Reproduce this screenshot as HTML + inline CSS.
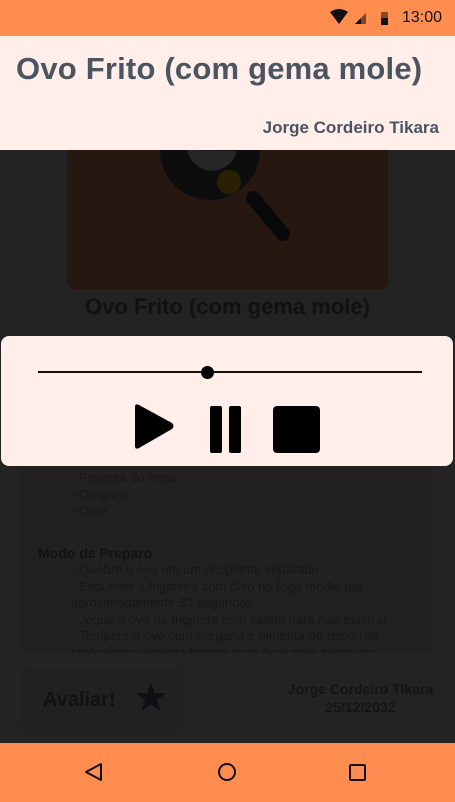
<!DOCTYPE html>
<html><head><meta charset="utf-8"><style>
*{margin:0;padding:0;box-sizing:border-box}
body{width:455px;height:802px;position:relative;overflow:hidden;background:#232323;font-family:"Liberation Sans",sans-serif}
.abs{position:absolute}
</style></head><body>
<div class="abs" style="left:0;top:0;width:455px;height:36px;background:#fe8d4f"></div>
<svg class="abs" style="left:330px;top:9px" width="70" height="18">
<path d="M0 3 Q9 -3 18 3 L9 15 Z" fill="#111"/>
<path d="M25 15 L36 4 L36 15 Z" fill="#7a4525"/><path d="M25 15 L31 9 L31 15 Z" fill="#111"/>
<rect x="51" y="3" width="7" height="13" rx="1" fill="#8a4a28"/><rect x="51" y="9" width="7" height="7" fill="#111"/>
</svg>
<div class="abs" style="left:402px;top:9px;font-size:16px;color:#111">13:00</div>
<div class="abs" style="left:0;top:36px;width:455px;height:114px;background:#ffeeea"></div>
<div class="abs" style="left:16px;top:51px;font-size:31px;letter-spacing:0.2px;font-weight:bold;color:#4b5560">Ovo Frito (com gema mole)</div>
<div class="abs" style="right:16px;top:118px;font-size:17px;font-weight:bold;color:#4b5560">Jorge Cordeiro Tikara</div>
<div class="abs" style="left:67px;top:150px;width:321px;height:139px;background:#261710;border-radius:0 0 8px 8px"></div>
<svg class="abs" style="left:155px;top:150px" width="140" height="100">
<path d="M5 0 A50 50 0 0 0 105 0 Z" fill="#0d0d0d"/>
<path d="M32 0 A26 28 0 0 0 82 1" fill="#262626"/>
<circle cx="74" cy="32" r="12" fill="#2a2105"/>
<line x1="98" y1="48" x2="128" y2="84" stroke="#08090a" stroke-width="14" stroke-linecap="round"/>
</svg>
<div class="abs" style="left:0;width:455px;top:294px;text-align:center;font-size:22px;font-weight:bold;color:#111">Ovo Frito (com gema mole)</div>
<div class="abs" style="left:20px;top:440px;width:412px;height:213px;background:#212121;border-radius:8px"></div>
<div class="abs" style="left:71px;top:470px;font-size:13px;line-height:16.5px;color:#171717">- Pimenta do reino<br>- Orégano<br>- Óleo</div>
<div class="abs" style="left:38px;top:545px;font-size:14px;font-weight:bold;color:#121212">Modo de Preparo</div>
<div class="abs" style="left:71px;top:562px;width:330px;height:91px;overflow:hidden;font-size:13px;line-height:16.5px;color:#171717">- Quebre o ovo em um recipiente separado<br>- Esquente a frigideira com óleo no fogo médio por aproximadamente 30 segundos<br>- Jogue o ovo na frigireira com calma para não espirrar<br>- Tempere o ovo com orégano e pimenta do reino (de preferência pimenta branca para ficar mais bonito na</div>
<div class="abs" style="left:21px;top:668px;width:162px;height:62px;background:#212121;border-radius:8px"></div>
<div class="abs" style="left:43px;top:689px;font-size:20px;font-weight:bold;color:#121212">Avaliar!</div>
<div class="abs" style="left:133px;top:676px;font-size:40px;line-height:44px;color:#0d0f13">★</div>
<div class="abs" style="left:283px;top:680px;width:155px;text-align:center;font-size:14px;font-weight:bold;color:#141414;line-height:18px">Jorge Cordeiro Tikara<br>25/12/2032</div>
<div class="abs" style="left:1px;top:336px;width:452px;height:130px;background:#ffeeea;border-radius:8px"></div>
<div class="abs" style="left:38px;top:371px;width:384px;height:2px;background:#111"></div>
<div class="abs" style="left:201px;top:366px;width:13px;height:13px;border-radius:50%;background:#000"></div>
<svg class="abs" style="left:130px;top:402px" width="200" height="54">
<path d="M5 5 Q5 1 9 3 L42 21 Q45 24 42 27 L9 46 Q5 48 5 44 Z" fill="#000"/>
<rect x="80" y="4" width="12" height="47" rx="2" fill="#000"/>
<rect x="99" y="4" width="12" height="47" rx="2" fill="#000"/>
<rect x="143" y="4" width="47" height="47" rx="4" fill="#000"/>
</svg>
<div class="abs" style="left:0;top:743px;width:455px;height:59px;background:#fe8d4f"></div>
<svg class="abs" style="left:0;top:743px" width="455" height="59">
<path d="M101 21 L101 37 L86 29 Z" fill="none" stroke="#111" stroke-width="2" stroke-linejoin="round"/>
<circle cx="227" cy="29" r="8" fill="none" stroke="#111" stroke-width="2"/>
<rect x="350" y="22" width="15" height="15" rx="1" fill="none" stroke="#111" stroke-width="2"/>
</svg>
</body></html>
